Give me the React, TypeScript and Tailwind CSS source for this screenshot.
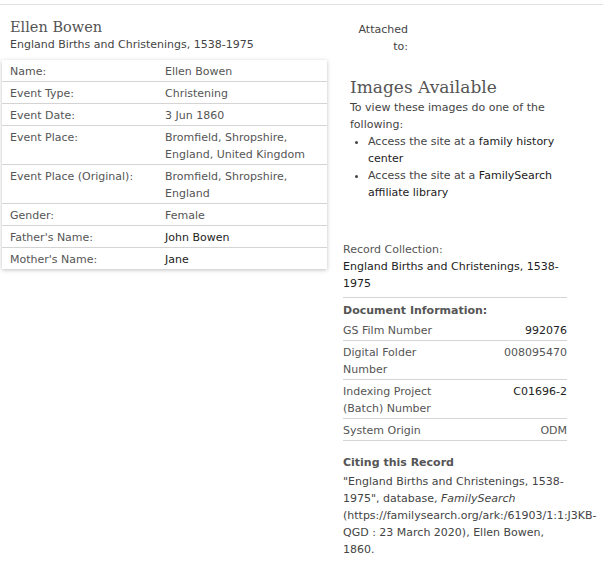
import React from "react";

const sans = { fontFamily: '"DejaVu Sans", Verdana, sans-serif' };

const facts: { label: string; value: string[]; dark?: boolean }[] = [
  { label: "Name:", value: ["Ellen Bowen"] },
  { label: "Event Type:", value: ["Christening"] },
  { label: "Event Date:", value: ["3 Jun 1860"] },
  { label: "Event Place:", value: ["Bromfield, Shropshire,", "England, United Kingdom"] },
  { label: "Event Place (Original):", value: ["Bromfield, Shropshire,", "England"] },
  { label: "Gender:", value: ["Female"] },
  { label: "Father's Name:", value: ["John Bowen"], dark: true },
  { label: "Mother's Name:", value: ["Jane"], dark: true },
];

const docInfo: { label: string[]; value: string; dark?: boolean }[] = [
  { label: ["GS Film Number"], value: "992076", dark: true },
  { label: ["Digital Folder", "Number"], value: "008095470" },
  { label: ["Indexing Project", "(Batch) Number"], value: "C01696-2", dark: true },
  { label: ["System Origin"], value: "ODM" },
];

export default function App() {
  return (
    <div className="w-[603px] h-[570px] bg-white overflow-hidden text-[11px] leading-[17px] text-[#555]" style={sans}>
      <div className="mt-1 border-t border-[#e2e2e2]" />
      <div className="flex">
        {/* left: record details */}
        <div className="w-[330px] pl-[2px]">
          <div className="pl-2 pt-[14px]">
            <h1 className="text-[14.5px] leading-[17px] text-[#555] font-['DejaVu_Serif',serif]">Ellen Bowen</h1>
            <div className="text-[#444]">England Births and Christenings, 1538-1975</div>
          </div>
          <div className="mt-[7px] w-[325px] bg-white shadow-[0_1px_4px_rgba(0,0,0,0.25)]">
            {facts.map((f, i) => (
              <div
                key={f.label}
                className={`flex pl-2 pt-[3px] pb-[1px] ${i < facts.length - 1 ? "border-b border-[#d4d4d4]" : ""}`}
              >
                <div className="w-[155px] shrink-0">{f.label}</div>
                <div className={f.dark ? "text-[#222]" : "text-[#555]"}>
                  {f.value.map((v) => (
                    <div key={v}>{v}</div>
                  ))}
                </div>
              </div>
            ))}
          </div>
        </div>

        {/* right: side panel */}
        <div className="flex-1">
          <div className="w-[78px] pt-4 text-right text-[#444]">
            <div>Attached</div>
            <div>to:</div>
          </div>

          <div className="pl-5 pt-5 w-[225px]">
            <h2 className="text-[17px] leading-[24px] text-[#555] font-['DejaVu_Serif',serif]">Images Available</h2>
            <p className="text-[#444]">To view these images do one of the following:</p>
            <ul className="pl-[18px] list-disc text-[#444]">
              <li>
                Access the site at a <span className="text-[#222]">family history center</span>
              </li>
              <li>
                Access the site at a <span className="text-[#222]">FamilySearch affiliate library</span>
              </li>
            </ul>
          </div>

          <div className="ml-[13px] mt-[40px] w-[224px]">
            <div className="pb-[5px] border-b border-[#d4d4d4]">
              <div>Record Collection:</div>
              <div className="text-[#222]">England Births and Christenings, 1538-1975</div>
            </div>
            <div className="pt-1 font-bold text-[#555]">Document Information:</div>
            {docInfo.map((d) => (
              <div key={d.value} className="flex justify-between pt-[3px] pb-[1px] border-b border-[#d4d4d4]">
                <div>
                  {d.label.map((l) => (
                    <div key={l}>{l}</div>
                  ))}
                </div>
                <div className={d.dark ? "text-[#222]" : "text-[#555]"}>{d.value}</div>
              </div>
            ))}
            <div className="pt-[13px] font-bold text-[#555]">Citing this Record</div>
            <p className="pt-[2px] text-[#444] w-[240px]">
              "England Births and Christenings, 1538-
              <br />
              1975", database, <i>FamilySearch</i>
              <br />
              (https://familysearch.org/ark:/61903/1:1:J3KB-
              <br />
              QGD : 23 March 2020), Ellen Bowen,
              <br />
              1860.
            </p>
          </div>
        </div>
      </div>
    </div>
  );
}
